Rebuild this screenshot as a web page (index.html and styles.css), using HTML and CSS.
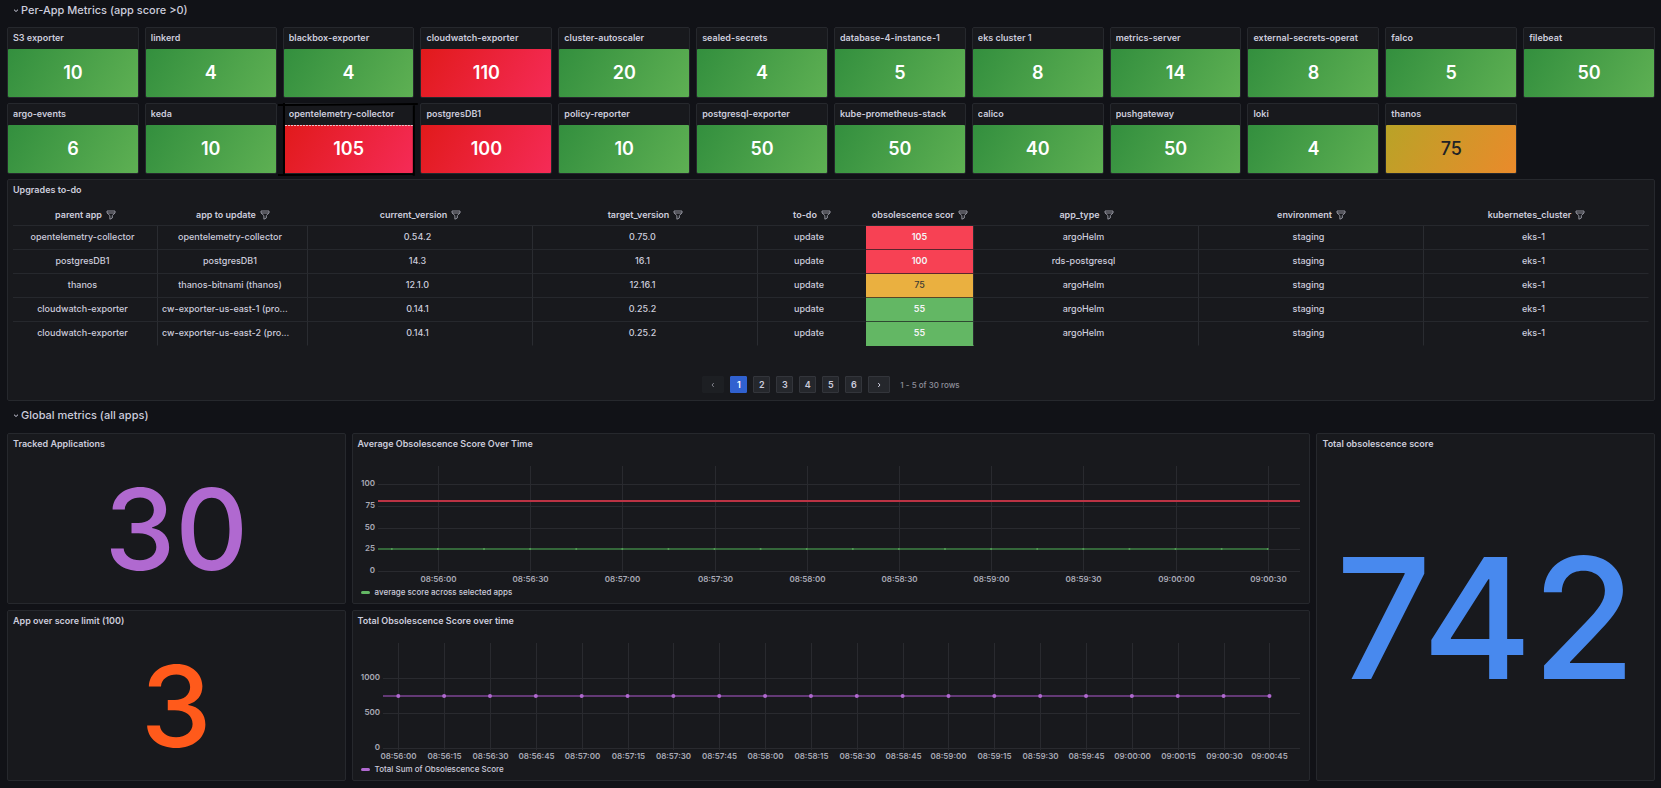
FILE: index.html
```html
<!DOCTYPE html>
<html lang="en">
<head>
<meta charset="utf-8">
<title>Obsolescence dashboard</title>
<link rel="stylesheet" href="styles.css">
</head>
<body>
<main class="dashboard">
  <section class="group">
    <h2 class="group-title"><button class="group-toggle" type="button" aria-expanded="true"><svg class="chevron" viewBox="0 0 6 6" aria-hidden="true"><path d="M1 2.7 3 4.5 5 2.7"/></svg>Per-App Metrics (app score &gt;0)</button></h2>
    <div class="tiles" id="tiles"></div>
    <article class="panel upgrades">
      <h3 class="panel-title">Upgrades to-do</h3>
      <table class="table">
        <colgroup><col class="col-parent"><col class="col-app"><col><col><col class="col-small"><col class="col-small"><col><col><col></colgroup>
        <thead><tr id="head"></tr></thead>
        <tbody id="rows"></tbody>
      </table>
      <nav class="pager" aria-label="Table pages">
        <button class="page arrow" type="button" disabled aria-label="Previous page"><svg class="chevron" viewBox="0 0 6 6"><path d="M3.8 1 2 3 3.8 5"/></svg></button>
        <button class="page current" type="button" aria-current="page">1</button>
        <button class="page" type="button">2</button>
        <button class="page" type="button">3</button>
        <button class="page" type="button">4</button>
        <button class="page" type="button">5</button>
        <button class="page" type="button">6</button>
        <button class="page arrow" type="button" aria-label="Next page"><svg class="chevron" viewBox="0 0 6 6"><path d="M2.2 1 4 3 2.2 5"/></svg></button>
        <span class="page-info">1 - 5 of 30 rows</span>
      </nav>
    </article>
  </section>
  <section class="group">
    <h2 class="group-title"><button class="group-toggle" type="button" aria-expanded="true"><svg class="chevron" viewBox="0 0 6 6" aria-hidden="true"><path d="M1 2.7 3 4.5 5 2.7"/></svg>Global metrics (all apps)</button></h2>
    <div class="overview">
      <article class="panel narrow"><h3 class="panel-title">Tracked Applications</h3><p class="stat purple">30</p></article>
      <article class="panel wide">
        <h3 class="panel-title">Average Obsolescence Score Over Time</h3>
        <svg class="chart" id="average" role="img" aria-label="Average obsolescence score"></svg>
        <p class="legend"><span class="swatch swatch-green"></span>average score across selected apps</p>
      </article>
      <article class="panel narrow tall"><h3 class="panel-title">Total obsolescence score</h3><p class="stat large blue">742</p></article>
      <article class="panel narrow"><h3 class="panel-title">App over score limit (100)</h3><p class="stat orange">3</p></article>
      <article class="panel wide">
        <h3 class="panel-title">Total Obsolescence Score over time</h3>
        <svg class="chart" id="total" role="img" aria-label="Total obsolescence score"></svg>
        <p class="legend"><span class="swatch swatch-purple"></span>Total Sum of Obsolescence Score</p>
      </article>
    </div>
  </section>
</main>
<script src="dashboard.js"></script>
</body>
</html>
```
FILE: styles.css
```css
* { box-sizing: border-box; }
body {
  margin: 0;
  background: #111217;
  color: #ccccdc;
  font: 600 9px/16px Inter, "Liberation Sans", sans-serif;
}
h2, h3, p { margin: 0; }
button { font: inherit; color: inherit; }
.dashboard { padding: 0 6px 6px 7px; }
.group-title { display: flex; height: 27px; padding: 0 0 7px 6px; align-items: center; }
.group + .group .group-title { height: 32px; padding-bottom: 4px; }
.group-toggle {
  display: flex; align-items: center; gap: 2px;
  padding: 0; border: 0; background: none; font-size: 11px; font-weight: 500; cursor: pointer;
}
.chevron { width: 6px; height: 6px; fill: none; stroke: currentColor; stroke-width: 1; }

.tiles { display: grid; grid-template-columns: repeat(12, minmax(0, 1fr)); gap: 5px 6px; }
.tile {
  position: relative; height: 71px; display: flex; flex-direction: column;
  background: #18191d; border: 1px solid #26282d; border-radius: 2px;
}
.tile-title { margin: 0 14px 0 5px; font-size: inherit; font-weight: 600; line-height: 17px; padding: 1px 0 3px; overflow: hidden; white-space: nowrap; }
.tile-value {
  flex: 1; display: grid; place-items: center; border-radius: 1px;
  font-size: 18px; font-weight: 600; color: #fff;
}
.tile-value.good { background: linear-gradient(120deg, #338f3e, #5eb053); }
.tile-value.bad { background: linear-gradient(120deg, #e11a1b, #f52b57); }
.tile-value.warn { background: linear-gradient(120deg, #b9a327, #ea8a2b); color: #202226; font-weight: 500; }
.mark { position: absolute; left: -6px; top: -2px; width: calc(100% + 10px); height: 74px; overflow: visible; fill: none; stroke: #000; stroke-width: 2; pointer-events: none; }
.mark .dashes { stroke: #f3c6c9; stroke-width: 1; stroke-dasharray: 2 1; }

.panel { background: #18191d; border: 1px solid #26282d; border-radius: 2px; display: flex; flex-direction: column; min-width: 0; }
.panel-title { font-size: inherit; font-weight: 600; line-height: 20px; padding: 0 5px; }
.upgrades { margin-top: 5px; min-height: 222px; }
.upgrades .table { margin: 3px 5px 0; width: calc(100% - 10px); }
.table { table-layout: fixed; border-collapse: separate; border-spacing: 0; text-align: center; }
.col-parent { width: 145px; }
.col-app { width: 150px; }
.col-small { width: 108px; }
.table th { height: 23px; padding: 1px 0 0; font-weight: 600; white-space: nowrap; border-bottom: 1px solid #26282d; }
.table td { height: 24px; padding: 0 9px 2px 4px; font-weight: 500; white-space: nowrap; overflow: hidden; text-overflow: ellipsis; border-right: 1px solid #2a2c31; border-bottom: 1px solid #26282d; }
.table td.long { text-align: left; }
.table td.score { padding: 0 4px 2px; font-weight: 600; color: #f4f4f6; border-bottom-color: rgba(24, 25, 29, .7); }
.table tr:last-child td { border-bottom-color: transparent; }
.table td:nth-child(5), .table td:last-child { border-right-color: transparent; }
.score.bad { background-color: #f74154; }
.table td.score.warn { background-color: #eab040; color: #3d3a33; font-weight: 500; }
.score.good { background-color: #63b764; }
.filter { padding: 0; border: 0; background: none; vertical-align: middle; margin-left: 4px; height: 10px; line-height: 0; color: #93949f; }
.filter svg { width: 10px; height: 10px; fill: none; stroke: currentColor; stroke-width: 1; stroke-linejoin: round; }

.pager { display: flex; justify-content: center; align-items: center; gap: 6px; margin: auto 0 7px; }
.page { width: 17px; height: 17px; padding: 0; display: grid; place-items: center; line-height: 15px; background: #25272c; border: 1px solid #33353b; border-radius: 1px; }
.page.arrow { width: 22px; }
.page.current { background: #3061d0; border-color: #3061d0; color: #fff; }
.page:disabled { background: #1d1f23; border-color: #1d1f23; color: #7c7d86; }
.page-info { margin-left: 4px; font-size: 8px; font-weight: 500; color: #8f909b; }

.overview { display: grid; grid-template-columns: repeat(24, minmax(0, 1fr)); grid-auto-rows: 171px; gap: 6px; }
.narrow { grid-column: span 5; }
.wide { grid-column: span 14; }
.tall { grid-row: span 2; }
.stat { flex: 1; display: grid; place-items: center; padding-top: 2px; font-size: 113px; font-weight: 500; line-height: 1; }
.stat.large { font-size: 168px; }
.purple { color: #b069d0; }
.orange { color: #ff5a1b; }
.blue { color: #4889ee; }
.chart { flex: 1; width: 100%; min-height: 0; font-size: 8px; font-weight: 600; fill: #a9aab6; }
.grid { stroke: #292a2f; shape-rendering: crispEdges; }
.limit { stroke: #bb3344; stroke-width: 2; }
.line-green { stroke: #34673a; stroke-width: 2; }
.line-purple { stroke: #633976; stroke-width: 2; }
.dot-green { fill: #56a158; }
.dot-purple { fill: #b069d0; }
.legend { display: flex; align-items: center; gap: 5px; padding: 0 8px 3px; font-size: 8px; font-weight: 500; }
.swatch { width: 9px; height: 3px; border-radius: 2px; }
.swatch-green { background: #63b764; }
.swatch-purple { background: #b069d0; }
```
FILE: dashboard.js
```javascript
const tiles = [
  ["S3 exporter", 10], ["linkerd", 4], ["blackbox-exporter", 4], ["cloudwatch-exporter", 110],
  ["cluster-autoscaler", 20], ["sealed-secrets", 4], ["database-4-instance-1", 5], ["eks cluster 1", 8],
  ["metrics-server", 14], ["external-secrets-operat", 8], ["falco", 5], ["filebeat", 50],
  ["argo-events", 6], ["keda", 10], ["opentelemetry-collector", 105], ["postgresDB1", 100],
  ["policy-reporter", 10], ["postgresql-exporter", 50], ["kube-prometheus-stack", 50], ["calico", 40],
  ["pushgateway", 50], ["loki", 4], ["thanos", 75]
];
const level = v => v >= 100 ? "bad" : v >= 75 ? "warn" : "good";
const mark = '<svg class="mark" viewBox="0 0 140 74" preserveAspectRatio="none" aria-hidden="true"><path d="M0 3 140 2M6 1V73M0 73 137 72M136 2V74"/><path class="dashes" d="M7 23.5H135"/></svg>';
document.getElementById("tiles").innerHTML = tiles.map(([name, v]) => {
  const marked = name === "opentelemetry-collector";
  return `<article class="tile"><h3 class="tile-title">${name}</h3><div class="tile-value ${level(v)}">${v}</div>${marked ? mark : ""}</article>`;
}).join("");

const heads = ["parent app", "app to update", "current_version", "target_version", "to-do", "obsolescence scor", "app_type", "environment", "kubernetes_cluster"];
const funnel = '<svg viewBox="0 0 10 10" aria-hidden="true"><path d="M1 1H9V2.8L6.3 5.6V8L3.9 9.2V5.6L1 2.8ZM1 3H9"/></svg>';
document.getElementById("head").innerHTML = heads.map(h =>
  `<th scope="col">${h}<button class="filter" type="button" aria-label="Filter ${h}">${funnel}</button></th>`).join("");

const rows = [
  ["opentelemetry-collector", "opentelemetry-collector", "0.54.2", "0.75.0", "update", 105, "argoHelm", "staging", "eks-1"],
  ["postgresDB1", "postgresDB1", "14.3", "16.1", "update", 100, "rds-postgresql", "staging", "eks-1"],
  ["thanos", "thanos-bitnami (thanos)", "12.1.0", "12.16.1", "update", 75, "argoHelm", "staging", "eks-1"],
  ["cloudwatch-exporter", "cw-exporter-us-east-1 (pro...", "0.14.1", "0.25.2", "update", 55, "argoHelm", "staging", "eks-1"],
  ["cloudwatch-exporter", "cw-exporter-us-east-2 (pro...", "0.14.1", "0.25.2", "update", 55, "argoHelm", "staging", "eks-1"]
];
const cellClass = (c, i) => i === 5 ? `score ${level(c)}` : String(c).endsWith("...") ? "long" : "";
document.getElementById("rows").innerHTML = rows.map(r =>
  `<tr>${r.map((c, i) => `<td class="${cellClass(c, i)}">${c}</td>`).join("")}</tr>`).join("");

const clock = s => [s / 3600, s / 60 % 60, s % 60].map(n => String(Math.floor(n)).padStart(2, "0")).join(":");

function draw(id, o) {
  const svg = document.getElementById(id);
  const w = svg.clientWidth, right = w - 10, top = 12, base = 117;
  const span = right - o.left;
  const x = t => o.left + (t - o.start) / o.seconds * span;
  const y = v => base - v / o.max * (base - top);
  let out = "";
  for (const v of o.ticks) {
    out += `<path class="grid" d="M${o.left} ${Math.round(y(v)) + .5}H${right}"/><text x="${o.left - 3}" y="${Math.round(y(v)) + 2}" text-anchor="end">${v}</text>`;
  }
  for (let t = o.first; t <= o.last; t += o.step) {
    const gx = Math.round(x(t)) + .5;
    out += `<path class="grid" d="M${gx} ${top}V${base + 2}"/><text x="${gx}" y="${base + 11}" text-anchor="middle">${clock(t)}</text>`;
  }
  if (o.limit) out += `<path class="limit" d="M${o.left} ${Math.round(y(o.limit))}H${right}"/>`;
  const ly = Math.round(y(o.value));
  out += `<path class="line-${o.color}" d="M${o.left} ${ly}H${x(o.last)}"/>`;
  for (let t = o.last; t >= o.start; t -= 15) out += `<circle class="dot-${o.color}" cx="${x(t)}" cy="${ly}" r="${o.dot}"/>`;
  svg.innerHTML = out;
}
const H = 8 * 3600, at = (m, s) => H + m * 60 + s;
function drawAll() {
  draw("average", { left: 25, start: at(55, 40.5), seconds: 300, max: 121, ticks: [0, 25, 50, 75, 100], first: at(56, 0), last: at(60, 30), step: 30, limit: 81, value: 25, color: "green", dot: 1 });
  draw("total", { left: 30, start: at(55, 55), seconds: 300, max: 1490, ticks: [0, 500, 1000], first: at(56, 0), last: at(60, 45), step: 15, value: 742, color: "purple", dot: 2 });
}
drawAll();
window.addEventListener("resize", drawAll);
```
